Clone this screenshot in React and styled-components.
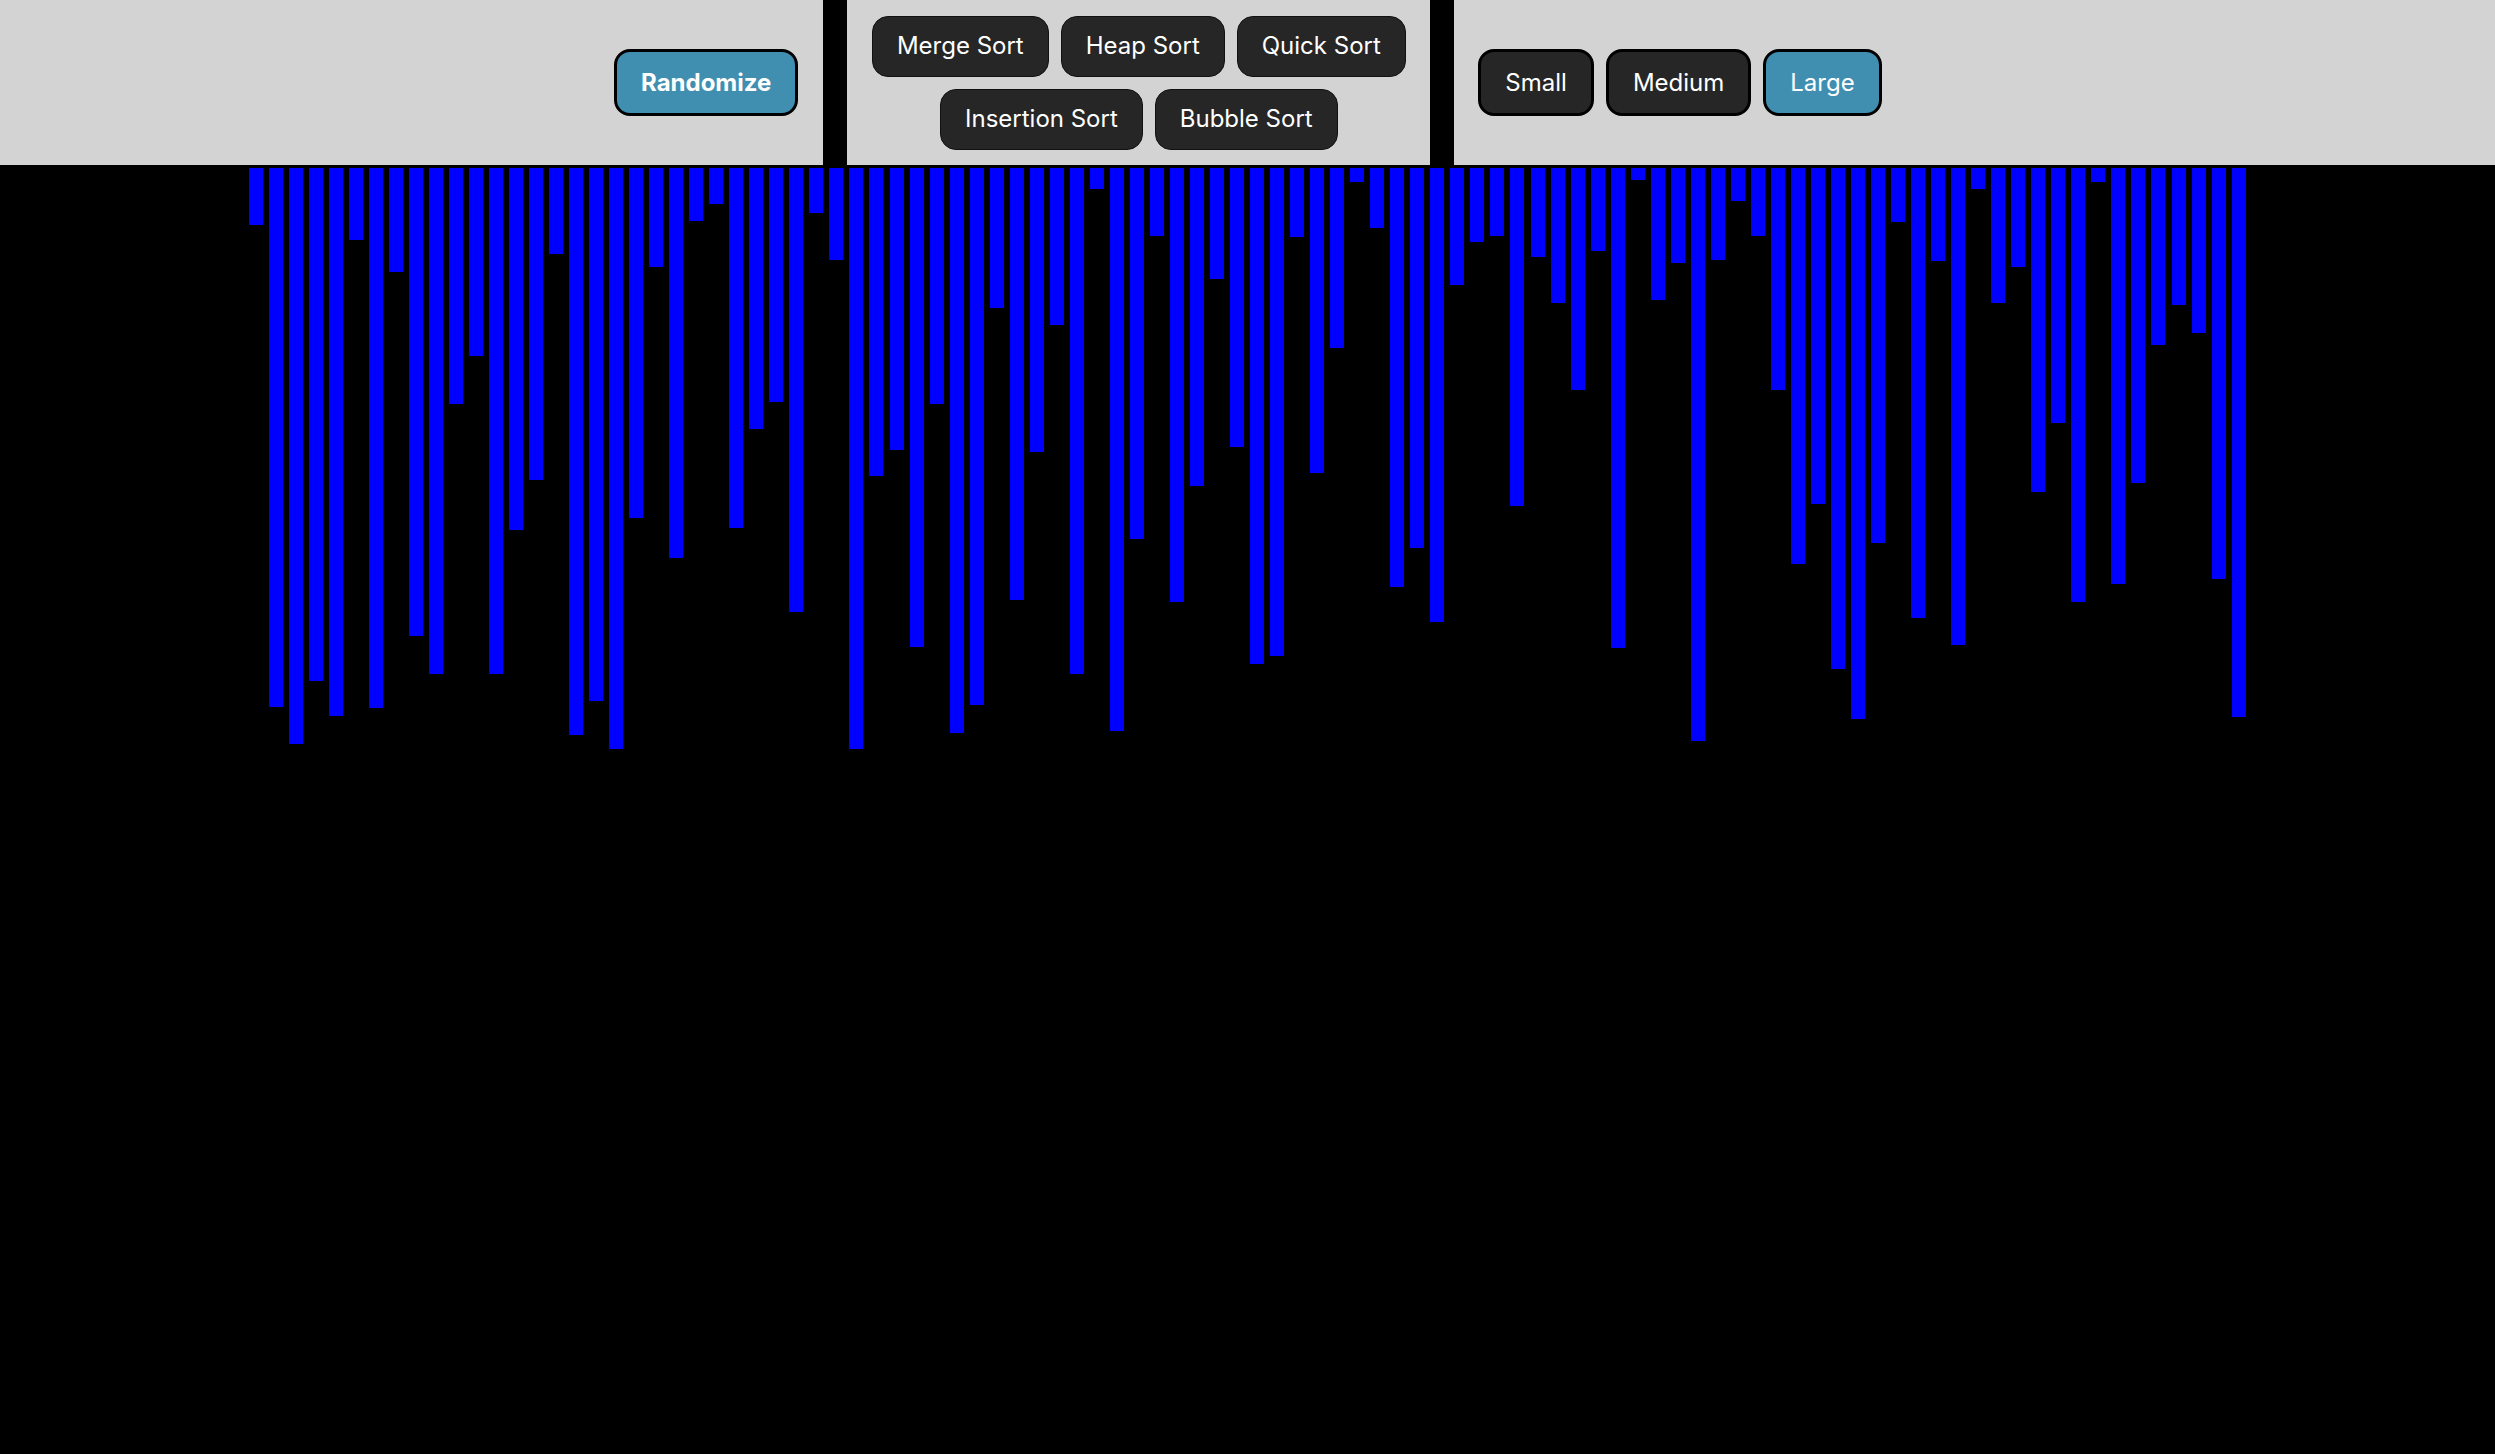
import styled, { createGlobalStyle } from "styled-components";
import { useState } from "react";

const GlobalStyle = createGlobalStyle`
  body {
    margin: 0;
    background-color: #000;
    font-family: Inter, "Noto Sans", sans-serif;
  }
`;

// bar heights as they were after the last shuffle
const heights = [
  57, 539, 576, 513, 548, 72, 540, 104, 468, 506,
  236, 188, 506, 362, 312, 86, 567, 533, 581, 350,
  99, 390, 53, 36, 360, 261, 234, 444, 45, 92,
  581, 308, 282, 479, 236, 565, 537, 140, 432, 284,
  157, 506, 21, 563, 371, 68, 434, 318, 111, 279,
  496, 488, 69, 305, 180, 14, 60, 419, 380, 454,
  117, 74, 68, 338, 89, 135, 222, 83, 480, 12,
  132, 95, 573, 92, 33, 68, 222, 396, 336, 501,
  551, 375, 54, 450, 93, 477, 21, 135, 99, 324,
  255, 434, 14, 416, 315, 177, 137, 165, 411, 549,
];

const Header = styled.header`
  display: flex;
  gap: 24px;
  height: 165px;
`;

const Panel = styled.div`
  background-color: #d3d3d3;
  box-sizing: border-box;
  display: flex;
  align-items: center;
`;

const LeftPanel = styled(Panel)`
  width: 33%;
  justify-content: flex-end;
  padding-right: 25px;
`;

const SortPanel = styled(Panel)`
  width: 583px;
  flex-direction: column;
  justify-content: center;
  gap: 12px;
  padding: 0 24px;
`;

const SortRow = styled.div`
  display: flex;
  gap: 12px;
  justify-content: center;
`;

const SizePanel = styled(Panel)`
  flex: 1;
  gap: 12px;
  padding-left: 24px;
`;

const Button = styled.button`
  font-family: Inter, "Noto Sans", sans-serif;
  font-size: 24px;
  line-height: 30px;
  color: #fff;
  cursor: pointer;
  background-color: ${(p) => (p.active ? "#418fb0" : "#262626")};
  border: 3px solid #000;
  border-radius: 16px;
  padding: 15.5px 24px;
  font-weight: ${(p) => (p.bold ? 700 : 400)};
`;

const SortButton = styled(Button)`
  border: 1.5px solid #111;
  padding: 14.5px 24px;
`;

const Bars = styled.div`
  width: 1998px;
  margin: 3px auto 0;
  display: flex;
  justify-content: space-between;
  align-items: flex-start;
`;

const Bar = styled.div`
  width: 14px;
  background-color: #0000ff;
`;

function App() {
  const [size, setSize] = useState("Large");

  return (
    <>
      <GlobalStyle />
      <Header>
        <LeftPanel>
          <Button active bold>
            Randomize
          </Button>
        </LeftPanel>
        <SortPanel>
          <SortRow>
            <SortButton>Merge Sort</SortButton>
            <SortButton>Heap Sort</SortButton>
            <SortButton>Quick Sort</SortButton>
          </SortRow>
          <SortRow>
            <SortButton>Insertion Sort</SortButton>
            <SortButton>Bubble Sort</SortButton>
          </SortRow>
        </SortPanel>
        <SizePanel>
          {["Small", "Medium", "Large"].map((s) => (
            <Button key={s} active={size === s} onClick={() => setSize(s)}>
              {s}
            </Button>
          ))}
        </SizePanel>
      </Header>
      <Bars>
        {heights.map((h, i) => (
          <Bar key={i} style={{ height: h }} />
        ))}
      </Bars>
    </>
  );
}

export default App;
